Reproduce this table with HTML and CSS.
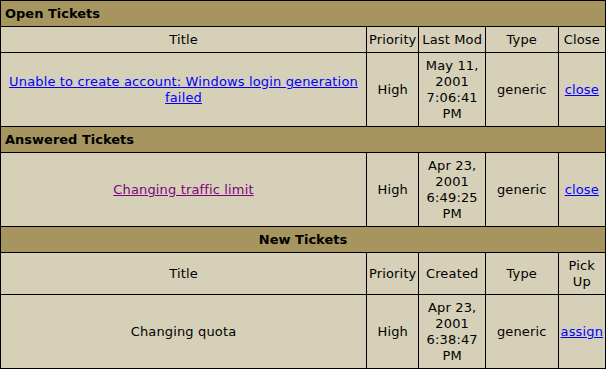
FILE: index.html
```html
<!DOCTYPE html>
<html lang="en">
<head>
  <meta charset="UTF-8">
  <title>Tickets</title>
  <link rel="stylesheet" href="styles.css">
</head>
<body>
  <table class="tickets">
    <colgroup>
      <col class="col-title">
      <col class="col-priority">
      <col class="col-date">
      <col class="col-type">
      <col class="col-action">
    </colgroup>

    <!-- Open tickets -->
    <tr class="section">
      <th colspan="5" class="section-left">Open Tickets</th>
    </tr>
    <tr class="heads">
      <td>Title</td>
      <td>Priority</td>
      <td>Last Mod</td>
      <td>Type</td>
      <td>Close</td>
    </tr>
    <tr>
      <td><a href="#" class="link">Unable to create account: Windows login generation failed</a></td>
      <td>High</td>
      <td>May 11, 2001 7:06:41 PM</td>
      <td>generic</td>
      <td><a href="#" class="link">close</a></td>
    </tr>

    <!-- Answered tickets -->
    <tr class="section">
      <th colspan="5" class="section-left">Answered Tickets</th>
    </tr>
    <tr>
      <td><a href="#" class="link visited">Changing traffic limit</a></td>
      <td>High</td>
      <td>Apr 23, 2001 6:49:25 PM</td>
      <td>generic</td>
      <td><a href="#" class="link">close</a></td>
    </tr>

    <!-- New tickets -->
    <tr class="section">
      <th colspan="5">New Tickets</th>
    </tr>
    <tr class="heads">
      <td>Title</td>
      <td>Priority</td>
      <td>Created</td>
      <td>Type</td>
      <td>Pick Up</td>
    </tr>
    <tr>
      <td>Changing quota</td>
      <td>High</td>
      <td>Apr 23, 2001 6:38:47 PM</td>
      <td>generic</td>
      <td><a href="#" class="link">assign</a></td>
    </tr>
  </table>
</body>
</html>
```

FILE: styles.css
```css
body {
  margin: 0;
  background-color: #d6d0b8;
  font-family: "DejaVu Sans", Verdana, sans-serif;
  font-size: 13px;
  line-height: 16px;
  letter-spacing: 0.15px;
  color: #000;
}
.tickets {
  width: 606px;
  border-collapse: collapse;
  table-layout: fixed;
  background-color: #d6d0b8;
}
.col-title { width: 363px; }
.col-priority { width: 52px; }
.col-date { width: 66px; }
.col-type { width: 72px; }
.col-action { width: 47px; }
.tickets td,
.tickets th {
  border: 1px solid #000;
  padding: 5px 2px 4px;
  text-align: center;
  vertical-align: middle;
}
.section th {
  background-color: #a6955e;
  font-weight: bold;
  letter-spacing: 0;
}
.section .section-left {
  text-align: left;
  padding-left: 4px;
}
.link {
  color: #0000ff;
  text-decoration: underline;
}
.link.visited {
  color: #800080;
}
```
